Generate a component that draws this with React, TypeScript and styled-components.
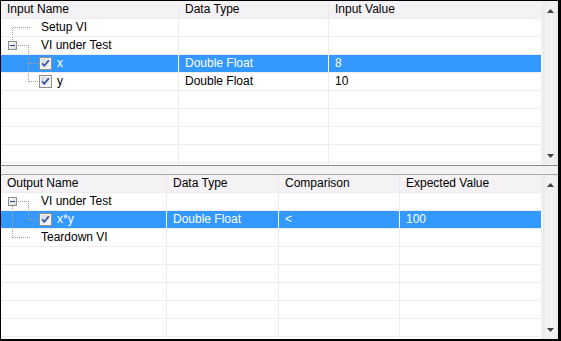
import React from "react";
import styled, { createGlobalStyle } from "styled-components";

const GlobalStyle = createGlobalStyle`
  html, body {
    margin: 0;
    padding: 0;
    background: #ffffff;
  }
  body {
    font-family: "Liberation Sans", Arial, sans-serif;
    font-size: 12px;
    color: #000;
  }
`;

const Frame = styled.div`
  width: 561px;
  height: 341px;
  box-sizing: border-box;
  border-style: solid;
  border-color: #000;
  border-width: 1px 3px 2px 1px;
  background: #fff;
  display: flex;
  flex-direction: column;
  overflow: hidden;
`;

const Pane = styled.div`
  height: 164px;
  display: flex;
  overflow: hidden;
`;

const Grid = styled.div`
  flex: 1;
  display: flex;
  flex-direction: column;
  overflow: hidden;
`;

const Row = styled.div<{ $cols: string; $header?: boolean }>`
  display: grid;
  grid-template-columns: ${(p) => p.$cols};
  height: 18px;
  flex: none;
  box-sizing: border-box;
  border-bottom: 1px solid #efebef;
  background: ${(p) => (p.$header ? "#f5f2f5" : "#fff")};
`;

const Cell = styled.div<{ $selected?: boolean; $tree?: boolean }>`
  display: flex;
  align-items: center;
  padding-left: ${(p) => (p.$tree ? "0" : "6px")};
  border-right: 1px solid ${(p) => (p.$selected ? "#ffffff" : "#efebef")};
  background: ${(p) => (p.$selected ? "#3399ff" : "transparent")};
  color: ${(p) => (p.$selected ? "#ffffff" : "#000")};
  white-space: nowrap;
  overflow: hidden;
  line-height: 17px;
`;

const Label = styled.span<{ $gap: number }>`
  margin-left: ${(p) => p.$gap}px;
`;

const Splitter = styled.div`
  height: 10px;
  flex: none;
  box-sizing: border-box;
  background: #f4f1f4;
  border-top: 1px solid #8c8c8c;
  border-bottom: 1px solid #a8a8a8;
`;

const ScrollBar = styled.div`
  width: 16px;
  flex: none;
  display: flex;
  flex-direction: column;
  align-items: center;
  justify-content: space-between;
  padding: 8px 0 7px;
  box-sizing: border-box;
  background: linear-gradient(to right, #e4e4e4 0px, #efefef 2px, #f3f3f3 8px, #ebebeb 100%);
  border-left: 1px solid #f6f6f6;
`;

type Guide =
  | "rootFirst"
  | "rootLast"
  | "expander"
  | "child"
  | "childLast";

const DOT = "#9c9c9c";

const dotted = {
  stroke: DOT,
  strokeWidth: 1,
  strokeDasharray: "1 1",
  shapeRendering: "crispEdges" as const,
};

const TreeGuide: React.FC<{
  kind: Guide;
  rootAbove?: boolean;
  rootBelow?: boolean;
}> = ({ kind, rootAbove, rootBelow }) => (
  <svg width="38" height="17" viewBox="0 0 38 17" style={{ flex: "none" }}>
    <defs>
      <linearGradient id="expfill" x1="0" y1="0" x2="1" y2="1">
        <stop offset="0" stopColor="#ffffff" />
        <stop offset="1" stopColor="#d6d6d6" />
      </linearGradient>
    </defs>
    {kind === "rootFirst" && (
      <>
        <line x1="11.5" y1="8.5" x2="29" y2="8.5" {...dotted} />
        <line x1="11.5" y1="8.5" x2="11.5" y2="17" {...dotted} />
      </>
    )}
    {kind === "rootLast" && (
      <>
        <line x1="11.5" y1="0" x2="11.5" y2="9" {...dotted} />
        <line x1="11.5" y1="8.5" x2="29" y2="8.5" {...dotted} />
      </>
    )}
    {kind === "expander" && (
      <>
        {rootAbove && <line x1="11.5" y1="0" x2="11.5" y2="4" {...dotted} />}
        {rootBelow && <line x1="11.5" y1="13" x2="11.5" y2="17" {...dotted} />}
        <line x1="17" y1="8.5" x2="29" y2="8.5" {...dotted} />
        <line x1="27.5" y1="10" x2="27.5" y2="17" {...dotted} />
        <rect x="7.5" y="4.5" width="8" height="8" fill="url(#expfill)" stroke="#8f8f8f" />
        <line x1="9" y1="8.5" x2="14" y2="8.5" stroke="#2e3f8c" strokeWidth="1" shapeRendering="crispEdges" />
      </>
    )}
    {(kind === "child" || kind === "childLast") && (
      <>
        {rootBelow && <line x1="11.5" y1="0" x2="11.5" y2="17" {...dotted} />}
        <line x1="27.5" y1="0" x2="27.5" y2={kind === "child" ? 17 : 9} {...dotted} />
        <line x1="27.5" y1="8.5" x2="37" y2="8.5" {...dotted} />
      </>
    )}
  </svg>
);

const CheckBox: React.FC = () => (
  <svg width="13" height="13" viewBox="0 0 13 13" style={{ flex: "none" }}>
    <defs>
      <linearGradient id="cbfill" x1="0" y1="0" x2="1" y2="1">
        <stop offset="0" stopColor="#d3d7de" />
        <stop offset="1" stopColor="#f8f8f8" />
      </linearGradient>
    </defs>
    <rect x="0.5" y="0.5" width="12" height="12" fill="#f4f4f4" stroke="#8e8f8f" />
    <rect x="2" y="2" width="9" height="9" fill="url(#cbfill)" />
    <path d="M3.2 6.4 L5.4 8.8 L9.8 3.2" fill="none" stroke="#3150a0" strokeWidth="1.7" />
  </svg>
);

const Arrow: React.FC<{ down?: boolean }> = ({ down }) => (
  <svg width="7" height="4" viewBox="0 0 7 4">
    <path d={down ? "M0 0 H7 L3.5 4 Z" : "M0 4 H7 L3.5 0 Z"} fill="#404040" />
  </svg>
);

type Line = {
  guide?: Guide;
  rootAbove?: boolean;
  rootBelow?: boolean;
  checked?: boolean;
  name?: string;
  values: string[];
  selected?: boolean;
};

const TreeTable: React.FC<{
  cols: string;
  headers: string[];
  lines: Line[];
  blanks: number;
}> = ({ cols, headers, lines, blanks }) => (
  <Pane>
    <Grid>
      <Row $cols={cols} $header>
        {headers.map((h) => (
          <Cell key={h}>{h}</Cell>
        ))}
      </Row>
      {lines.map((l, i) => (
        <Row $cols={cols} key={i}>
          <Cell $tree $selected={l.selected}>
            {l.guide && (
              <TreeGuide kind={l.guide} rootAbove={l.rootAbove} rootBelow={l.rootBelow} />
            )}
            {l.checked && <CheckBox />}
            <Label $gap={l.checked ? 5 : 2}>{l.name}</Label>
          </Cell>
          {l.values.map((v, j) => (
            <Cell key={j} $selected={l.selected}>
              {v}
            </Cell>
          ))}
        </Row>
      ))}
      {Array.from({ length: blanks }).map((_, i) => (
        <Row $cols={cols} key={"b" + i}>
          {headers.map((h) => (
            <Cell key={h} />
          ))}
        </Row>
      ))}
    </Grid>
    <ScrollBar>
      <Arrow />
      <Arrow down />
    </ScrollBar>
  </Pane>
);

const inputLines: Line[] = [
  { guide: "rootFirst", name: "Setup VI", values: ["", ""] },
  { guide: "expander", rootAbove: true, name: "VI under Test", values: ["", ""] },
  { guide: "child", checked: true, name: "x", values: ["Double Float", "8"], selected: true },
  { guide: "childLast", checked: true, name: "y", values: ["Double Float", "10"] },
];

const outputLines: Line[] = [
  { guide: "expander", rootBelow: true, name: "VI under Test", values: ["", "", ""] },
  {
    guide: "childLast",
    rootBelow: true,
    checked: true,
    name: "x*y",
    values: ["Double Float", "<", "100"],
    selected: true,
  },
  { guide: "rootLast", name: "Teardown VI", values: ["", "", ""] },
];

const App: React.FC = () => {
  return (
    <>
      <GlobalStyle />
      <Frame>
        <TreeTable
          cols="178px 150px 1fr"
          headers={["Input Name", "Data Type", "Input Value"]}
          lines={inputLines}
          blanks={5}
        />
        <Splitter />
        <TreeTable
          cols="166px 112px 121px 1fr"
          headers={["Output Name", "Data Type", "Comparison", "Expected Value"]}
          lines={outputLines}
          blanks={6}
        />
      </Frame>
    </>
  );
};

export default App;
